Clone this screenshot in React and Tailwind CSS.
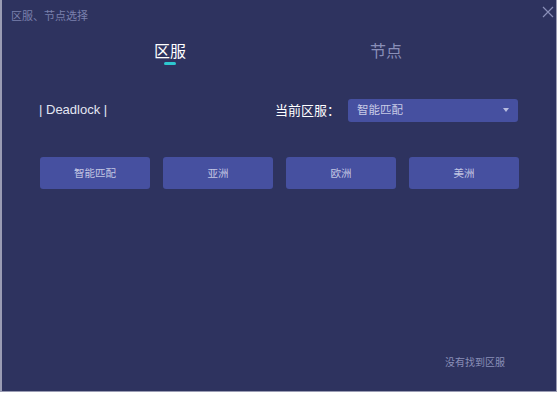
export default function App() {
  const font = { fontFamily: '"Noto Sans CJK SC", "Noto Sans", sans-serif' };
  return (
    <div className="w-[558px] h-[393px] bg-white" style={font}>
      <div className="w-[557px] h-[392px] bg-[#2e335f] border-l-2 border-r border-b border-[#9a9cb4] flex flex-col relative">
        <div className="h-[30px] flex items-center pl-[9px] text-[11px] text-[#7b80ad]">
          区服、节点选择
        </div>
        <svg className="absolute left-[540px] top-[6px]" width="12" height="12" viewBox="0 0 12 12">
          <path d="M1 1L11 11M11 1L1 11" stroke="#8a8fb8" strokeWidth="1.2" />
        </svg>
        <div className="flex h-[36px] mt-[8px]">
          <div className="w-[336px] flex flex-col items-center">
            <div className="text-[16px] leading-[24px] text-white">区服</div>
            <div className="w-[12px] h-[3px] bg-[#2ec8cf] mt-[0px] rounded-sm"></div>
          </div>
          <div className="w-[96px] flex flex-col items-center">
            <div className="text-[16px] leading-[24px] text-[#8a8fb8]">节点</div>
          </div>
        </div>
        <div className="flex items-center h-[24px] mt-[24px]">
          <div className="pl-[37px] w-[273px] text-[13px] text-[#e4e6f2]" style={{ fontFamily: '"Liberation Sans", sans-serif' }}>
            | Deadlock |
          </div>
          <div className="text-[13px] text-white w-[73px]">当前区服：</div>
          <div className="w-[170px] h-[23px] bg-[#4650a0] rounded-[3px] flex items-center pl-[9px] pr-[9px] justify-between">
            <span className="text-[11.5px] text-[#c8cbe6]">智能匹配</span>
            <svg width="6" height="4" viewBox="0 0 6 4"><path d="M0 0H6L3 4Z" fill="#b8bce0" /></svg>
          </div>
        </div>
        <div className="flex gap-[13px] pl-[38px] mt-[35px]">
          {["智能匹配", "亚洲", "欧洲", "美洲"].map((t) => (
            <div key={t} className="w-[110px] h-[32px] bg-[#4650a0] rounded-[3px] flex items-center justify-center text-[10.5px] text-[#c3c6e3]">
              {t}
            </div>
          ))}
        </div>
        <div className="flex-1"></div>
        <div className="flex justify-end pr-[51px] pb-[22px] text-[10px] text-[#8a8fb8]">
          没有找到区服
        </div>
      </div>
    </div>
  );
}
